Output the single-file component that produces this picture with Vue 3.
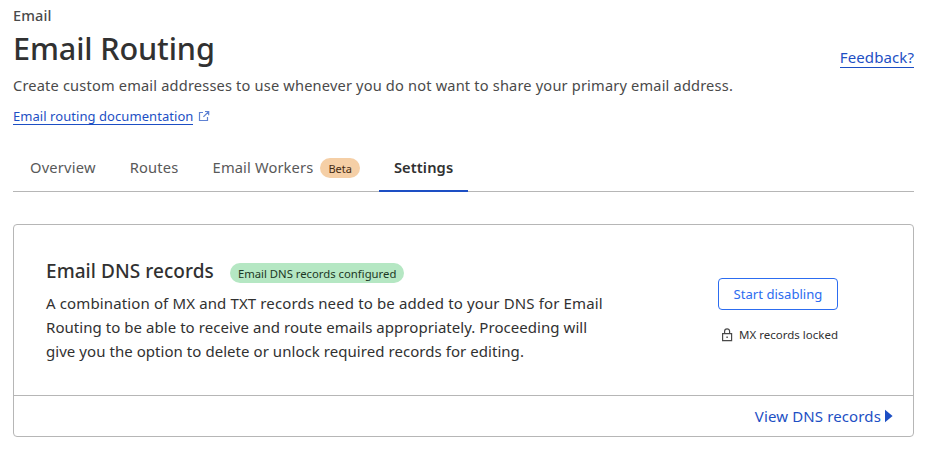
<script setup>
const tabs = [
  { label: 'Overview', key: 'overview' },
  { label: 'Routes', key: 'routes' },
  { label: 'Email Workers', key: 'workers', badge: 'Beta' },
  { label: 'Settings', key: 'settings', active: true },
]
const description = [
  'A combination of MX and TXT records need to be added to your DNS for Email',
  'Routing to be able to receive and route emails appropriately. Proceeding will',
  'give you the option to delete or unlock required records for editing.',
]
</script>

<template>
  <main class="page">
    <header class="head">
      <div class="intro">
        <div class="crumb"><span>Email</span></div>
        <h1><span>Email Routing</span></h1>
        <p class="lead"><span>Create custom email addresses to use whenever you do not want to share your primary email address.</span></p>
        <div class="docs">
          <a class="doclink">Email routing documentation</a>
          <svg class="ext" width="12" height="12" viewBox="0 0 12 12" fill="none" stroke="#5f82d3" stroke-width="1.2">
            <path d="M5 2.5H1.5v8h8V7M7 1.5h3.7v3.7M10.7 1.5 5.4 6.8" />
          </svg>
        </div>
      </div>
      <a class="feedback">Feedback?</a>
    </header>

    <nav class="tabs">
      <a v-for="t in tabs" :key="t.key" class="tab" :class="[t.key, { active: t.active }]">
        <span class="label">{{ t.label }}</span>
        <span v-if="t.badge" class="pill beta">{{ t.badge }}</span>
      </a>
    </nav>

    <section class="card">
      <div class="body">
        <div class="info">
          <div class="heading">
            <h2>Email DNS records</h2>
            <span class="pill ok">Email DNS records configured</span>
          </div>
          <p class="text"><span v-for="(line, i) in description" :key="i" :class="'line' + i">{{ line }}</span></p>
        </div>
        <div class="actions">
          <button>Start disabling</button>
          <div class="locked">
            <svg width="12" height="14" viewBox="0 0 12 14" fill="none" stroke="#4a4a4a" stroke-width="1.2">
              <path d="M1.6 5.6h9v7H1.6zM3.6 5.5V3.3a2.5 2.5 0 0 1 5 0v2.2" />
              <path d="M5.4 8.4h1.4v1.5H5.4z" fill="#4a4a4a" stroke="none" />
            </svg>
            <span>MX records locked</span>
          </div>
        </div>
      </div>
      <footer class="foot">
        <a>View DNS records</a>
        <svg width="8" height="14" viewBox="0 0 8 14"><path d="M0 .8 7.6 7 0 13.2z" fill="#1d4fc4" /></svg>
      </footer>
    </section>
  </main>
</template>

<style>
body { background: #fff; }
</style>

<style scoped>
.page {
  box-sizing: border-box;
  width: 931px;
  height: 452px;
  overflow: hidden;
  padding: 5px 17px 0 13px;
  font-family: "Noto Sans", "Open Sans", sans-serif;
  color: #313131;
  white-space: nowrap;
}
h1, h2, p { margin: 0; }
.head { display: flex; justify-content: space-between; align-items: flex-start; height: 139px; }
.crumb { height: 20px; line-height: 21px; font-size: 14.5px; font-weight: 500; letter-spacing: .1px; color: #4a4a4a; }
h1 { height: 46px; line-height: 46px; font-size: 30.6px; font-weight: 500; letter-spacing: -.12px; }
.lead { margin-top: 3px; height: 23px; line-height: 22px; font-size: 14.6px; letter-spacing: .18px; color: #4a4a4a; }
.docs { display: flex; align-items: flex-start; margin-top: 11px; }
.doclink { height: 16px; line-height: 16px; font-size: 13px; letter-spacing: .06px; color: #1d4fc4; border-bottom: 1px solid #1d4fc4; }
.ext { margin: 2px 0 0 5px; }
.feedback { margin-top: 42px; height: 20px; line-height: 20px; font-size: 15px; letter-spacing: .1px; color: #1d4fc4; border-bottom: 1px solid #1d4fc4; }
.tabs { display: flex; height: 47px; border-bottom: 1px solid #b6b6b6; }
.tab { box-sizing: border-box; display: flex; align-items: center; height: 48px; padding: 0 17px; font-size: 14.7px; line-height: 20px; letter-spacing: .2px; color: #595959; }
.label { margin-top: -2px; }
.workers { letter-spacing: .13px; }
.tab.active { padding: 2px 15px 0; margin-left: 2px; font-weight: 600; letter-spacing: .1px; color: #313131; border-bottom: 2px solid #1d4fc4; }
.pill { box-sizing: border-box; height: 20px; border-radius: 10px; padding: 0 8px; font-size: 11.3px; line-height: 21px; letter-spacing: 0; }
.beta { margin-left: 7px; background: #f5cfa6; color: #442a12; font-size: 11px; }
.card { box-sizing: border-box; margin-top: 32px; height: 213px; border: 1px solid #b6b6b6; border-radius: 4px; }
.body { display: flex; justify-content: space-between; height: 170px; padding: 0 75px 0 32px; }
.info { padding-top: 34px; }
.heading { display: flex; align-items: flex-start; height: 32px; }
h2 { height: 24px; line-height: 24px; font-size: 19px; font-weight: 500; letter-spacing: .06px; }
.ok { margin: 4px 0 0 16px; background: #b5e7c3; color: #1c3825; }
.text { display: flex; flex-direction: column; align-items: flex-start; font-size: 15px; line-height: 24px; letter-spacing: .05px; }
.line0 { letter-spacing: .13px; }
.actions { display: flex; flex-direction: column; align-items: flex-end; padding-top: 53px; }
button { box-sizing: border-box; width: 120px; height: 32px; padding: 0; border: 1px solid #2c6cf0; border-radius: 4px; background: #fff; color: #2c6cf0; font-family: inherit; font-size: 13.1px; }
.locked { display: flex; align-items: center; gap: 6px; margin-top: 16px; height: 18px; line-height: 18px; font-size: 11.5px; }
.foot { display: flex; align-items: center; justify-content: flex-end; gap: 4px; height: 40px; padding-right: 20px; border-top: 1px solid #b6b6b6; color: #1d4fc4; font-size: 15px; letter-spacing: .13px; }
</style>
